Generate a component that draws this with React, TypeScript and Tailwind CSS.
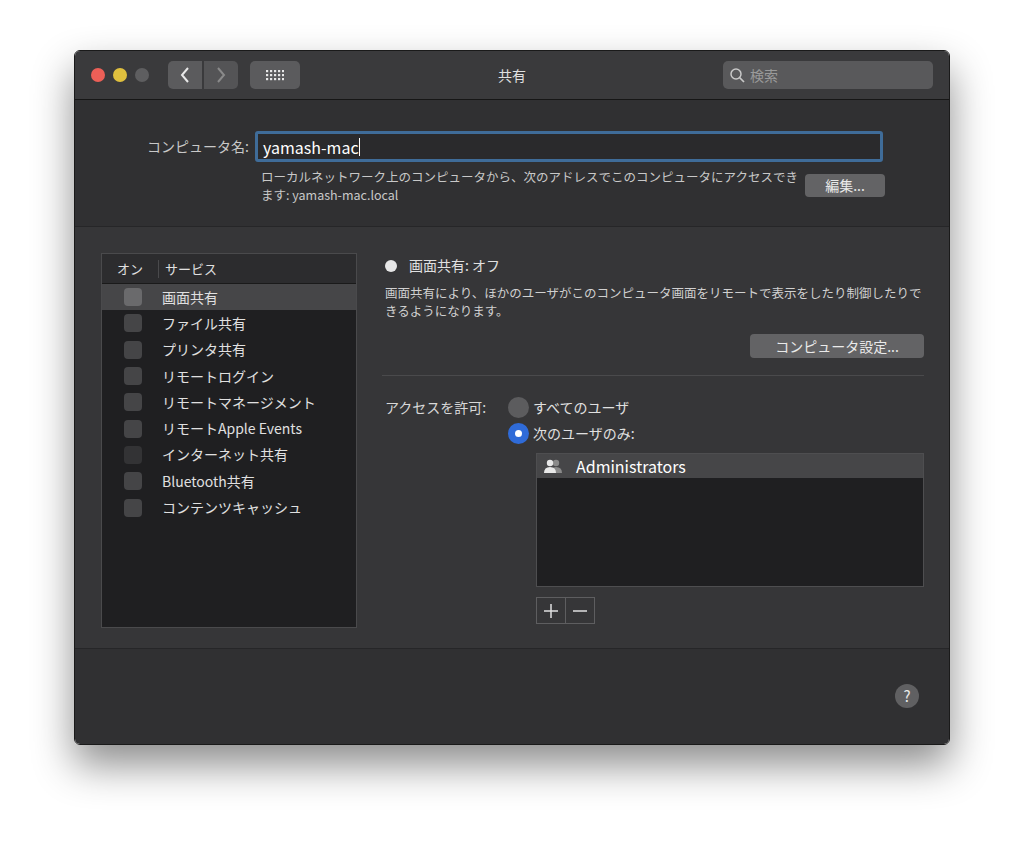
import React from "react";

const F = { fontFamily: '"Noto Sans CJK JP", "Noto Sans", sans-serif' };

const services = ["画面共有","ファイル共有","プリンタ共有","リモートログイン","リモートマネージメント","リモートApple Events","インターネット共有","Bluetooth共有","コンテンツキャッシュ"];

export default function App() {
  return (
    <div className="w-[1024px] h-[843px] bg-white pt-[50px] pl-[74px]" style={F}>
      <div className="w-[876px] h-[695px] rounded-[6px] overflow-hidden border border-[#1a1a1a] shadow-[0_20px_40px_rgba(0,0,0,0.45)] flex flex-col text-[#dcdcdc]">
        {/* title bar */}
        <div className="h-[49px] bg-[#3a3a3c] border-b border-[#161616] flex items-center px-[16px] relative">
          <div className="flex gap-[8px]">
            <div className="w-[14px] h-[14px] rounded-full bg-[#ec5f57]" />
            <div className="w-[14px] h-[14px] rounded-full bg-[#e0c03e]" />
            <div className="w-[14px] h-[14px] rounded-full bg-[#5e5e60]" />
          </div>
          <div className="flex gap-[2px] ml-[19px]">
            <div className="w-[34px] h-[28px] rounded-l-[5px] bg-[#5b5b5d] flex items-center justify-center">
              <svg width="10" height="16" viewBox="0 0 10 16"><path d="M8 1 L2 8 L8 15" stroke="#e8e8e8" strokeWidth="2" fill="none"/></svg>
            </div>
            <div className="w-[34px] h-[28px] rounded-r-[5px] bg-[#545456] flex items-center justify-center">
              <svg width="10" height="16" viewBox="0 0 10 16"><path d="M2 1 L8 8 L2 15" stroke="#8a8a8a" strokeWidth="2" fill="none"/></svg>
            </div>
          </div>
          <div className="ml-[12px] w-[50px] h-[28px] rounded-[5px] bg-[#5b5b5d] flex items-center justify-center">
            <svg width="18" height="12" viewBox="0 0 18 12" fill="#e8e8e8">
              {[0,1,2].map(r=>[0,1,2,3,4].map(c=><rect key={r+"-"+c} x={c*4} y={r*4+1} width="2.2" height="2.2"/>))}
            </svg>
          </div>
          <div className="absolute left-0 right-0 text-center text-[14px] text-[#e0e0e0] pointer-events-none">共有</div>
          <div className="ml-auto w-[210px] h-[28px] rounded-[5px] bg-[#59595b] flex items-center px-[7px] gap-[5px] text-[14px] text-[#9a9a9a]">
            <svg width="15" height="15" viewBox="0 0 15 15"><circle cx="6" cy="6" r="5" stroke="#c8c8c8" strokeWidth="1.5" fill="none"/><path d="M9.5 9.5 L14 14" stroke="#c8c8c8" strokeWidth="1.7"/></svg>
            検索
          </div>
        </div>
        {/* top */}
        <div className="h-[127px] bg-[#303032] border-b border-[#262628] pt-[31px]">
          <div className="flex items-center">
            <div className="w-[180px] text-right text-[14px] text-[#c8c8c8] pr-[6px]">コンピュータ名:</div>
            <div className="w-[628px] h-[31px] rounded-[3px] border-[3px] border-[#3f6c99] bg-[#2a2a2c] flex items-center px-[5px] text-[16px] text-white">yamash-mac<span className="w-px h-[18px] bg-white" /></div>
          </div>
          <div className="flex mt-[6px] pl-[186px]">
            <div className="w-[540px] text-[12.5px] leading-[18px] text-[#c8c8c8]">ローカルネットワーク上のコンピュータから、次のアドレスでこのコンピュータにアクセスできます: yamash-mac.local</div>
            <div className="ml-[4px] mt-[6px] w-[80px] h-[23px] rounded-[4px] bg-[#636365] text-[14px] text-[#eaeaea] flex items-center justify-center">編集...</div>
          </div>
        </div>
        {/* middle */}
        <div className="h-[422px] bg-[#363638] border-b border-[#262628] flex pt-[26px] pl-[26px]">
          <div className="w-[256px] h-[375px] border border-[#4a4a4c] bg-[#1f1f21]">
            <div className="h-[30px] bg-[#2c2c2e] flex items-center text-[13px] text-[#e0e0e0] border-b border-[#1a1a1a]">
              <div className="w-[56px] text-center">オン</div>
              <div className="w-px h-[18px] bg-[#4a4a4c]" />
              <div className="pl-[6px]">サービス</div>
            </div>
            {services.map((s,i)=>(
              <div key={s} className={"h-[26.3px] flex items-center text-[14px] " + (i===0?"bg-[#464648]":"")}>
                <div className="w-[60px] flex justify-center pl-[2px]"><div className={"w-[18px] h-[18px] rounded-[4px] " + (i===0?"bg-[#6a6a6c]":i===6?"bg-[#333335]":"bg-[#454547]")} /></div>
                <div className="text-[#e0e0e0]">{s}</div>
              </div>
            ))}
          </div>
          <div className="ml-[25px] w-[542px] pt-[2px]">
            <div className="flex items-center gap-[12px] pl-[3px]"><div className="w-[12px] h-[12px] rounded-full bg-[#e6e6e6]" /><span className="text-[14px] text-[#e0e0e0]">画面共有: オフ</span></div>
            <div className="mt-[8px] pl-[3px] text-[12.5px] leading-[18px] text-[#d0d0d0]">画面共有により、ほかのユーザがこのコンピュータ画面をリモートで表示をしたり制御したりできるようになります。</div>
            <div className="flex justify-end mt-[14px]"><div className="w-[174px] h-[24px] rounded-[4px] bg-[#636365] text-[14px] text-[#eaeaea] flex items-center justify-center">コンピュータ設定...</div></div>
            <div className="mt-[17px] h-px bg-[#4a4a4c]" />
            <div className="flex mt-[20px] pl-[3px]">
              <div className="text-[14px] text-[#d8d8d8] leading-[22px] w-[123px]">アクセスを許可:</div>
              <div className="flex-1">
                <div className="flex items-center gap-[4px] h-[22px]"><div className="w-[21px] h-[21px] rounded-full bg-[#5c5c5e]" /><span className="text-[14px] text-[#e0e0e0]">すべてのユーザ</span></div>
                <div className="flex items-center gap-[4px] h-[22px] mt-[4px]"><div className="w-[21px] h-[21px] rounded-full bg-[#2f6bd8] flex items-center justify-center"><div className="w-[7px] h-[7px] rounded-full bg-white" /></div><span className="text-[14px] text-[#e0e0e0]">次のユーザのみ:</span></div>
                <div className="ml-[28px] mt-[9px] h-[134px] border border-[#4e4e50] bg-[#1f1f21]">
                  <div className="h-[24px] bg-[#464648] flex items-center pl-[5px] gap-[12px] text-[16px] text-white">
                    <svg width="22" height="14" viewBox="0 0 22 14"><circle cx="14" cy="4" r="3.2" fill="#8a8a8a"/><path d="M8 14 Q8 8 14 8 Q20 8 20 14Z" fill="#8a8a8a"/><circle cx="8" cy="4" r="3.2" fill="#e8e8e8"/><path d="M2 14 Q2 8 8 8 Q14 8 14 14Z" fill="#e8e8e8"/></svg>
                    Administrators
                  </div>
                </div>
                <div className="ml-[28px] mt-[10px] flex w-[59px] h-[27px] border border-[#5e5e60]">
                  <div className="flex-1 border-r border-[#5e5e60] flex items-center justify-center"><svg width="14" height="14"><path d="M7 0V14M0 7H14" stroke="#e0e0e0" strokeWidth="1.5"/></svg></div>
                  <div className="flex-1 flex items-center justify-center"><svg width="14" height="14"><path d="M0 7H14" stroke="#e0e0e0" strokeWidth="1.5"/></svg></div>
                </div>
              </div>
            </div>
          </div>
        </div>
        {/* bottom */}
        <div className="flex-1 bg-[#303032] flex items-end justify-end pr-[30px] pb-[36px]">
          <div className="w-[24px] h-[24px] rounded-full bg-[#606062] text-[15px] text-[#eaeaea] flex items-center justify-center">?</div>
        </div>
      </div>
    </div>
  );
}
